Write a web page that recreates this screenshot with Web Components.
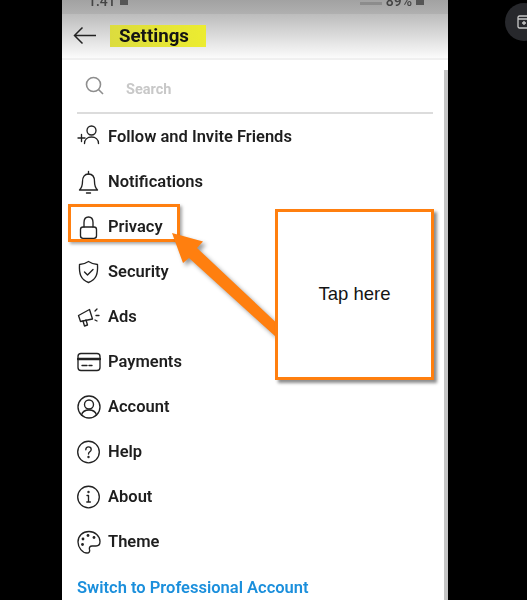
<!DOCTYPE html>
<html>
	<head>
		<title>Settings</title>
		<style>
			html, body {
				margin: 0;
				height: 600px;
				overflow: hidden;
				background: #000;
			}
		</style>
	</head>
	<body>
		<phone-frame>
			<settings-header>Settings</settings-header>
			<search-box>Search</search-box>
			<settings-row icon="follow">Follow and Invite Friends</settings-row>
			<settings-row icon="bell">Notifications</settings-row>
			<settings-row icon="lock">Privacy</settings-row>
			<settings-row icon="shield">Security</settings-row>
			<settings-row icon="ads">Ads</settings-row>
			<settings-row icon="card">Payments</settings-row>
			<settings-row icon="account">Account</settings-row>
			<settings-row icon="help">Help</settings-row>
			<settings-row icon="about">About</settings-row>
			<settings-row icon="theme">Theme</settings-row>
			<settings-link>Switch to Professional Account</settings-link>
		</phone-frame>
		<side-button></side-button>
		<focus-box></focus-box>
		<point-arrow></point-arrow>
		<call-out>Tap here</call-out>

		<script type="module">
			const ICONS = {
				follow: '<path d="M1 13h7M4.500 9.500v7"/><circle cx="14.500" cy="5.500" r="4.500"/><path d="M7.500 18.500c0-4 3-6.500 7-6.500s7 2.500 7 6.500"/>',
				bell: '<path d="M2.500 20c2-2 3-3.500 3-8.500 0-4.500 2-7.500 6-7.500s6 3 6 7.500c0 5 1 6.500 3 8.500z"/><path d="M11.500 1.500V4M9.500 23h4"/>',
				lock: '<path d="M7 12V7.500C7 4 8.500 2 11.500 2S16 4 16 7.500V12"/><rect x="3.500" y="12" width="16" height="11.300" rx="2.500"/>',
				shield: '<path d="M11.500 1.500c3 2 5.500 3 9 3 .5 9-1 15-9 18-8-3-9.500-9-9-18 3.500 0 6-1 9-3z"/><path d="M7.500 12l3 3 5.500-5.500"/>',
				ads: '<path d="M1.500 10.500l11-6 3 9.500-12 2.500z"/><path d="M6 16l1.500 5 3-1-1.500-5"/><path d="M18 6l2-2M19 10.500h3M18 15l2 1" stroke-width="1.300"/>',
				card: '<rect x="1" y="3.500" width="22" height="17" rx="3"/><path d="M1 9h22" stroke-width="2.400"/><path d="M5 15.500h5M12 15.500h3"/>',
				account: '<circle cx="12" cy="12" r="11"/><circle cx="12" cy="9.500" r="4.500"/><path d="M4.500 20c1-3.500 4-5 7.500-5s6.500 1.500 7.500 5"/>',
				help: '<circle cx="11.500" cy="12" r="10.800"/><path d="M8.800 9.800c0-2 1.200-3 2.700-3s2.700 1 2.700 2.600c0 2.400-2.700 2.400-2.700 4.600"/><circle cx="11.500" cy="17" r=".5"/>',
				about: '<circle cx="11.500" cy="12" r="10.800"/><path d="M10 10.500h1.500v6.500M9.800 17h3.600"/><circle cx="11.500" cy="7" r=".5"/>',
				theme: '<path d="M12 1.500C5.500 1.500 1 6 1 12c0 5.500 4.500 11 9 11 2.500 0 3-2 2.500-3.500-.6-2 .5-3.500 2.500-3.500h4c2.500 0 4-1.500 4-4.500C23 6 18 1.500 12 1.500z"/><g fill="#222" stroke="none"><circle cx="6" cy="9" r="1.400"/><circle cx="11" cy="5.500" r="1.400"/><circle cx="17" cy="7.500" r="1.400"/><circle cx="5.500" cy="14.500" r="1.400"/></g>'
			};

			class PhoneFrame extends HTMLElement {
				constructor() {
					super();
					this.attachShadow({ mode: 'open' }).innerHTML = `
						<style>
							:host {
								display: flex;
								flex-direction: column;
								position: relative;
								box-sizing: border-box;
								width: 386px;
								height: 600px;
								margin-left: 62px;
								overflow: hidden;
								background: #fff;
								font-family: Roboto, "Liberation Sans", sans-serif;
								filter: blur(.35px);
							}
							.scroll {
								position: absolute;
								right: 0;
								top: 70px;
								bottom: 0;
								width: 4px;
								background: #c4c4c4;
							}
						</style>
						<slot></slot>
						<div class="scroll"></div>`;
				}
			}
			customElements.define('phone-frame', PhoneFrame);

			class SettingsHeader extends HTMLElement {
				constructor() {
					super();
					this.attachShadow({ mode: 'open' }).innerHTML = `
						<style>
							:host {
								display: block;
								flex: none;
							}
							.status {
								display: flex;
								justify-content: space-between;
								align-items: flex-end;
								box-sizing: border-box;
								height: 14px;
								padding: 0 24px 6px 26px;
								overflow: hidden;
								background: linear-gradient(#a2a2a2, #b0b0b0);
								color: #444;
								font-size: 14px;
								font-weight: 500;
								line-height: 14px;
							}
							.group {
								display: flex;
								align-items: flex-end;
								gap: 4px;
							}
							.chip {
								width: 8px;
								height: 6px;
								margin-bottom: 3px;
								background: #555;
							}
							.chip.faint {
								width: 22px;
								height: 3px;
								background: #8c8c8c;
							}
							.bar {
								display: flex;
								align-items: center;
								height: 44px;
								padding-left: 11px;
								background: linear-gradient(#bcbcbc, #fbfbfb);
								border-bottom: 2px solid #f0f0f0;
							}
							svg {
								flex: none;
								width: 24px;
								height: 20px;
							}
							.title {
								margin-left: 13px;
								padding: 0 17px 0 9px;
								height: 22px;
								background: linear-gradient(90deg, #dcdc3e, #ecec30);
								color: #141414;
								font-size: 18.700px;
								font-weight: 700;
								line-height: 22px;
							}
						</style>
						<div class="status">
							<span class="group"><span>1:41</span><span class="chip"></span></span>
							<span class="group"><span class="chip faint"></span><span>89%</span><span class="chip"></span></span>
						</div>
						<div class="bar">
							<svg viewBox="0 0 24 20" fill="none" stroke="#222" stroke-width="1.500"><path d="M23 9.500H1.500M9.500 1.500l-8 8 8 8"/></svg>
							<span class="title"><slot></slot></span>
						</div>`;
				}
			}
			customElements.define('settings-header', SettingsHeader);

			class SearchBox extends HTMLElement {
				constructor() {
					super();
					this.attachShadow({ mode: 'open' }).innerHTML = `
						<style>
							:host {
								display: flex;
								flex: none;
								align-items: center;
								box-sizing: border-box;
								height: 54px;
								margin: 0 15px;
								padding: 0 0 0 8px;
								border-bottom: 2px solid #dcdcdc;
								color: #c8c8c8;
								font-size: 14.500px;
								font-weight: 700;
							}
							svg {
								width: 20px;
								height: 20px;
								margin: 0 21px 0 0;
							}
							span {
								margin-top: 6px;
							}
						</style>
						<svg viewBox="0 0 20 20" fill="none" stroke="#8e8e8e" stroke-width="1.600"><circle cx="8.500" cy="8.500" r="7"/><path d="M13.500 13.500l4.500 4.500"/></svg>
						<span><slot></slot></span>`;
				}
			}
			customElements.define('search-box', SearchBox);

			class SettingsRow extends HTMLElement {
				constructor() {
					super();
					let name = this.getAttribute('icon');
					this.attachShadow({ mode: 'open' }).innerHTML = `
						<style>
							:host {
								display: flex;
								flex: none;
								align-items: center;
								height: 45px;
								padding-left: 15px;
								color: #1e1e1e;
								font-size: 16.500px;
								font-weight: 600;
							}
							svg {
								flex: none;
								width: 24px;
								height: 24px;
								margin-right: 7px;
							}
						</style>
						<svg viewBox="0 0 24 24" fill="none" stroke="#222" stroke-width="1.350" stroke-linecap="round" stroke-linejoin="round">${ICONS[name]}</svg>
						<slot></slot>`;
				}
			}
			customElements.define('settings-row', SettingsRow);

			class SettingsLink extends HTMLElement {
				constructor() {
					super();
					this.attachShadow({ mode: 'open' }).innerHTML = `
						<style>
							:host {
								display: block;
								flex: none;
								padding: 1px 0 0 15px;
								line-height: 45px;
								color: #1b8fdc;
								font-size: 16.500px;
								font-weight: 600;
							}
						</style>
						<slot></slot>`;
				}
			}
			customElements.define('settings-link', SettingsLink);

			class SideButton extends HTMLElement {
				constructor() {
					super();
					this.attachShadow({ mode: 'open' }).innerHTML = `
						<style>
							:host {
								position: absolute;
								left: 505px;
								top: 3px;
								width: 38px;
								height: 38px;
								border-radius: 50%;
								background: #27282c;
								filter: blur(.5px);
							}
							svg {
								position: absolute;
								left: 12px;
								top: 12px;
								width: 14px;
								height: 14px;
							}
						</style>
						<svg viewBox="0 0 14 14" fill="none" stroke="#c8c8c8" stroke-width="1.300"><rect x="1" y="1" width="12" height="12" rx="1.500"/><path d="M1 4h12M7 6v4M5 8h4"/></svg>`;
				}
			}
			customElements.define('side-button', SideButton);

			class FocusBox extends HTMLElement {
				constructor() {
					super();
					this.attachShadow({ mode: 'open' }).innerHTML = `
						<style>
							:host {
								position: absolute;
								left: 68px;
								top: 204px;
								box-sizing: border-box;
								width: 112px;
								height: 38px;
								border: 3px solid #ff7f0f;
								box-shadow: 2px 2px 3px rgba(0, 0, 0, .35);
							}
						</style>`;
				}
			}
			customElements.define('focus-box', FocusBox);

			class PointArrow extends HTMLElement {
				constructor() {
					super();
					this.attachShadow({ mode: 'open' }).innerHTML = `
						<style>
							:host {
								position: absolute;
								left: 165px;
								top: 225px;
								width: 120px;
								height: 120px;
							}
							svg {
								display: block;
								overflow: visible;
								filter: drop-shadow(3px 3px 2px rgba(0, 0, 0, .4));
							}
						</style>
						<svg width="120" height="120" viewBox="165 225 120 120"><path fill="#ff7f0f" d="M172 233L203 241.500 197 248 275 321.500V336L189 258 183 263z"/></svg>`;
				}
			}
			customElements.define('point-arrow', PointArrow);

			class CallOut extends HTMLElement {
				constructor() {
					super();
					this.attachShadow({ mode: 'open' }).innerHTML = `
						<style>
							:host {
								position: absolute;
								left: 275px;
								top: 209px;
								display: flex;
								align-items: center;
								justify-content: center;
								box-sizing: border-box;
								width: 159px;
								height: 171px;
								padding-bottom: 2px;
								border: 3px solid #ff7f0f;
								background: #fff;
								box-shadow: 3px 3px 3px rgba(0, 0, 0, .45);
								color: #141414;
								font-family: "Liberation Sans", Arial, sans-serif;
								font-size: 18.500px;
							}
						</style>
						<slot></slot>`;
				}
			}
			customElements.define('call-out', CallOut);
		</script>
	</body>
</html>
